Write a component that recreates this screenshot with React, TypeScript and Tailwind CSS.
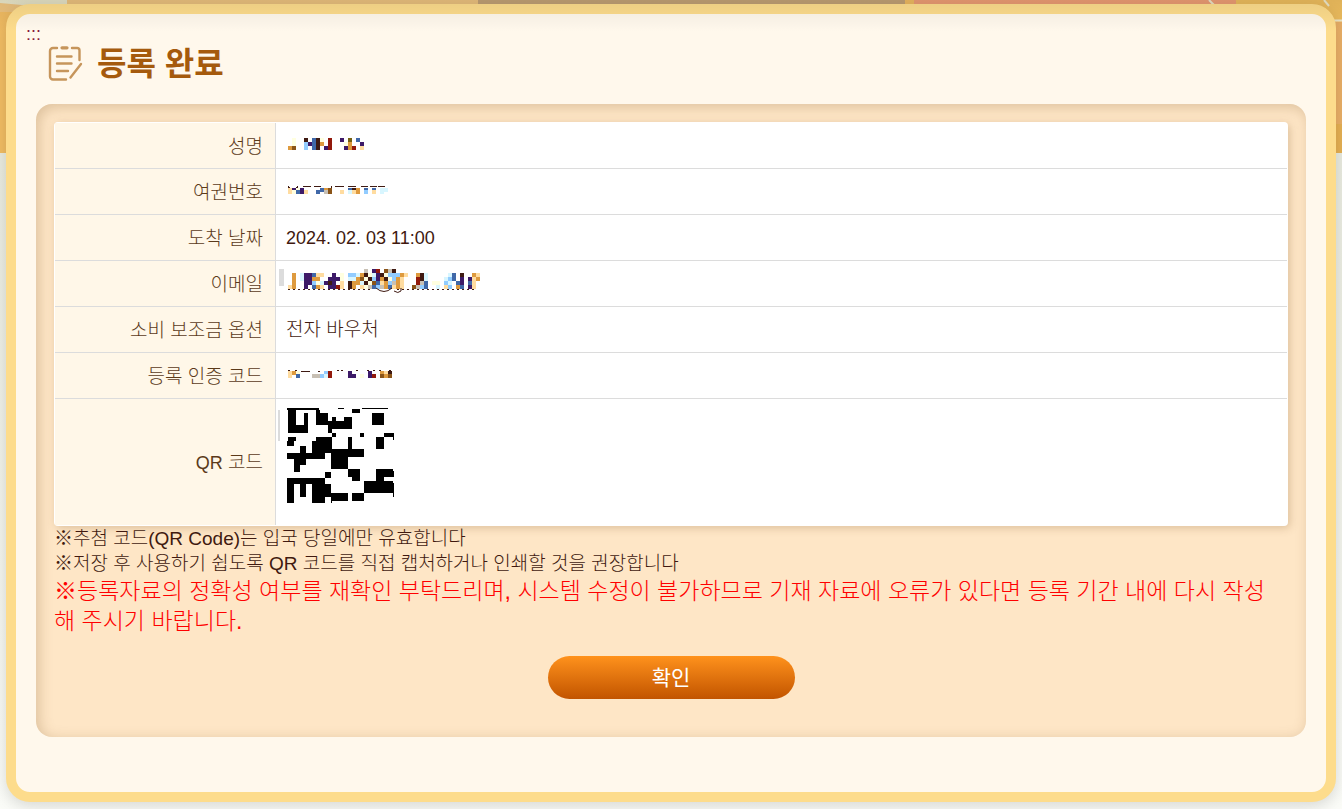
import type { ReactNode } from 'react';

interface MosaicRow {
  y: number;
  cells: string;
}

interface Field {
  label: ReactNode;
  value: ReactNode;
}

// One letter per tile colour, a dot leaves the tile empty
const tileColors: Record<string, string> = {
  D: '#3f1a12',
  P: '#3d1a68',
  B: '#4068a8',
  L: '#92ccff',
  c: '#d8f6ff',
  R: '#92190c',
  W: '#8a5418',
  O: '#de9a3e',
  Y: '#ffdca0',
  C: '#ffffe0',
  G: '#c8c0b4',
  K: '#756010',
};

const nameTiles: MosaicRow[] = [
  { y: 0, cells: '.C..D.BDC.R..P.K.B.' },
  { y: 4, cells: '.C..LPBDO.R...CO..P' },
  { y: 8, cells: 'OW..L.BD.PR...POR.Y' },
];

const passportTiles: MosaicRow[] = [
  { y: 2, cells: 'YPCP....BOW....BDO.B.B.cc' },
  { y: 4, cells: 'YCBPY..B.GW..Y.cYO.L.Y.c' },
];

const emailTiles: MosaicRow[] = [
  { y: 0, cells: '...................G.PR.WGD' },
  { y: 4, cells: '.O.cPPBYY..P.C.LLcODCcPDCLLLOY..ODc.....cB.D..OY' },
  { y: 8, cells: '.O.cPPOO..PPPC.ccOWCDLPODCLOY...RDc....cLB.P.PYO' },
  { y: 12, cells: '.O..PPLCcPDP.Y.DOOcDCWBYOLGOY...RGB.CC.Lc.BP.BY.' },
  { y: 16, cells: 'YO..P.BOY.PPRY.DO.YCGBLGOBYOY..WGLB..c.YL.OB.PY.' },
];

const codeTiles: MosaicRow[] = [
  { y: 1, cells: 'YOC......LR....P....P..OYD' },
  { y: 4, cells: 'Y.B...GGLcR....PP.C.PR.WOW' },
];

// x, y, width, height
const qrBlocks = [
  [0, 0, 96, 6], [3, 6, 24, 69], [3, 51, 60, 24], [51, 15, 12, 60],
  [87, 6, 12, 9], [87, 15, 36, 36], [123, 39, 72, 24], [123, 51, 12, 24],
  [135, 27, 12, 12], [171, 27, 24, 12], [153, 0, 18, 3], [195, 3, 24, 12],
  [225, 0, 78, 3], [255, 15, 36, 36], [135, 75, 12, 12], [219, 75, 12, 12],
  [291, 75, 30, 12], [318, 87, 3, 9], [267, 87, 24, 36], [183, 87, 12, 36],
  [0, 99, 21, 15], [3, 87, 24, 12], [87, 87, 48, 48], [75, 99, 57, 36],
  [39, 114, 18, 57], [0, 135, 114, 18], [21, 153, 36, 18], [21, 171, 18, 21],
  [132, 123, 99, 24], [132, 135, 3, 48], [135, 123, 48, 60], [114, 192, 18, 18],
  [183, 183, 36, 24], [195, 207, 24, 12], [267, 183, 51, 24], [267, 207, 24, 12],
  [318, 189, 3, 18], [231, 219, 87, 36], [318, 225, 3, 42], [0, 210, 114, 18],
  [0, 228, 21, 57], [39, 228, 18, 39], [75, 210, 39, 75], [114, 228, 18, 39],
  [132, 255, 3, 30], [135, 255, 48, 24], [195, 255, 36, 24],
];

function Mosaic({
  rows,
  label,
  height,
  children,
}: {
  rows: MosaicRow[];
  label: string;
  height: number;
  children?: ReactNode;
}) {
  return (
    <svg
      role="img"
      aria-label={label}
      width={200}
      height={height}
      shapeRendering="crispEdges"
      className="ml-0.5 block overflow-visible"
    >
      {rows.map((row) =>
        row.cells.split('').map((cell, i) =>
          cell === '.' ? null : (
            <rect
              key={`${row.y}-${i}`}
              x={i * 4}
              y={row.y}
              width={4}
              height={4}
              fill={tileColors[cell]}
            />
          )
        )
      )}
      {children}
    </svg>
  );
}

function QrCode() {
  return (
    <svg
      role="img"
      aria-label="QR 코드"
      viewBox="0 0 321 285"
      shapeRendering="crispEdges"
      className="ml-px block h-[95px] w-[107px] overflow-visible"
    >
      <rect x="-27" y="6" width="6" height="93" fill="#dcdcdc" />
      {qrBlocks.map(([x, y, width, height], i) => (
        <rect key={i} x={x} y={y} width={width} height={height} />
      ))}
    </svg>
  );
}

function FormIcon() {
  return (
    <svg
      viewBox="0 1 34 34"
      fill="none"
      stroke="#c6955b"
      strokeWidth={2.4}
      strokeLinecap="round"
      strokeLinejoin="round"
      className="h-[34px] w-[34px] overflow-visible"
      aria-hidden="true"
    >
      <path d="M8 2H4a3 3 0 0 0-3 3v25.500a3 3 0 0 0 3 3h13" />
      <path d="M23 2h5a2.500 2.500 0 0 1 2.500 2.500V14" />
      <path d="M13 1.800h5" strokeWidth={3.2} />
      <path d="M8 10.500h14.500M8 17.500h14.500M8 25h11" />
      <path d="M32 18 21.500 31.500" />
    </svg>
  );
}

function Banner() {
  return (
    <svg
      viewBox="0 0 1342 153"
      preserveAspectRatio="none"
      className="absolute inset-x-0 top-0 h-[153px] w-full"
      aria-hidden="true"
    >
      <rect width="1342" height="153" fill="#f2bd63" />
      <rect width="671" height="12" fill="#eec480" />
      <path d="M0 0h67v5H22L0 3z" fill="#e8e5c8" />
      <rect x="478" width="427" height="10" fill="#c4a377" />
      <rect x="914" width="322" height="12" fill="#f09f76" />
      <path d="M1236 0h106v20h-106z" fill="#f0bf5f" />
      <path
        d="M1209 0l6 6M1324 0l5 6M1330 20.500h12"
        stroke="#efe9cb"
        strokeWidth="2"
      />
      <rect x="1330" y="22" width="12" height="102" fill="#ebb067" />
      <rect x="1330" y="124" width="12" height="29" fill="#e7b153" />
    </svg>
  );
}

const fields: Field[] = [
  { label: '성명', value: <Mosaic rows={nameTiles} height={16} label="성명" /> },
  {
    label: '여권번호',
    value: (
      <Mosaic rows={passportTiles} height={12} label="여권번호">
        <path
          d="M0 0v2M9 0v2M1 1h1M8 1h1M15 1l2-1h4l2 1M26 1l2-1h3l2 1M43 0v2M47 0h7l2 1M60 0h8M73 1l2-1h3l2 1M82 1l2-1h3l2 1M90 1l2-1h3l2 1"
          fill="none"
          stroke="#3f1a12"
        />
      </Mosaic>
    ),
  },
  {
    label: '도착 날짜',
    value: <span className="text-[18px]">2024. 02. 03 11:00</span>,
  },
  {
    label: '이메일',
    value: (
      <Mosaic rows={emailTiles} height={30} label="이메일">
        <path d="M-9 0h5v17h-5z" fill="#dcdcdc" />
        <path
          d="M0 20h84M109 20h77"
          fill="none"
          stroke="#3f1a12"
          strokeDasharray="2 3"
        />
        <path
          d="M88 19q8 7 16 0M106 22q4 3 7 0v-3"
          fill="none"
          stroke="#3f1a12"
          shapeRendering="auto"
        />
      </Mosaic>
    ),
  },
  { label: '소비 보조금 옵션', value: '전자 바우처' },
  {
    label: '등록 인증 코드',
    value: (
      <Mosaic rows={codeTiles} height={12} label="등록 인증 코드">
        <path
          d="M0 0h2M7 0h2M13 1h9M30 1h2M49 0h2M53 0h2M68 0h2M79 0h2M85 0h2M91 0h2M101 0h2"
          stroke="#3f1a12"
        />
      </Mosaic>
    ),
  },
  {
    label: (
      <>
        <span className="text-[18px]">QR</span> 코드
      </>
    ),
    value: <QrCode />,
  },
];

export default function App() {
  return (
    <div className="relative min-h-screen bg-gradient-to-b from-[#e6e8da] to-[#fbfcf8] px-1.5 pt-1 pb-[7px] font-['Liberation_Sans','Noto_Sans_CJK_KR',sans-serif] text-[#40190f]">
      <Banner />

      <main className="relative rounded-3xl border-10 border-[#fddc8c] bg-[#fff8ec] px-5 pb-[55px] shadow-[0_4px_16px_rgba(0,0,0,0.15)]">
        {/* Title */}
        <header className="relative h-[90px] pt-8 pl-[13px]">
          <a
            href="#content"
            accessKey="C"
            className="absolute top-2.5 -left-2.5 text-[18px] leading-5 text-[#8b1a3c]"
          >
            :::
          </a>
          <div className="flex items-center gap-3.5">
            <FormIcon />
            <h1 className="text-[32px] leading-9 font-bold text-[#a55a0d]">
              등록 완료
            </h1>
          </div>
        </header>

        {/* Registration details */}
        <section
          id="content"
          className="rounded-2xl bg-[#fee6c6] px-[18px] pt-[18px] pb-[38px] shadow-[inset_3px_3px_14px_rgba(120,80,30,0.25)]"
        >
          <div className="overflow-hidden rounded bg-white p-px shadow-[2px_2px_8px_rgba(120,80,30,0.25)]">
            <table className="w-full border-separate border-spacing-0 text-[19px] leading-6">
              <tbody>
                {fields.map((field, index) => (
                  <tr key={index} className="group">
                    <th
                      scope="row"
                      className="h-[46px] w-[221px] border-r border-b border-[#dcdcdc] bg-[#fff7e8] pt-0.5 pr-3 text-right font-light text-[#5b3a1a] group-last:h-[126px] group-last:border-b-0"
                    >
                      {field.label}
                    </th>
                    <td className="border-b border-[#dcdcdc] pl-2.5 font-light group-last:border-b-0 group-last:pt-[9px] group-last:align-top">
                      {field.value}
                    </td>
                  </tr>
                ))}
              </tbody>
            </table>
          </div>

          <div className="text-[19px] leading-[25px] font-light">
            <p>※추첨 코드(QR Code)는 입국 당일에만 유효합니다</p>
            <p>
              ※저장 후 사용하기 쉽도록 QR 코드를 직접 캡처하거나 인쇄할 것을
              권장합니다
            </p>
            <p className="pr-3 text-[23px] leading-[30px] text-[#ff0000]">
              ※등록자료의 정확성 여부를 재확인 부탁드리며, 시스템 수정이
              불가하므로 기재 자료에 오류가 있다면 등록 기간 내에 다시 작성해
              주시기 바랍니다.
            </p>
          </div>

          <div className="mt-5 flex justify-center">
            <button
              type="button"
              className="h-[43px] w-[247px] rounded-full bg-gradient-to-b from-[#ff921c] to-[#c25400] text-[21px] text-white"
            >
              확인
            </button>
          </div>
        </section>
      </main>

      <div className="pointer-events-none absolute inset-x-0 top-0 h-8 bg-gradient-to-b from-black/7 to-transparent" />
    </div>
  );
}
